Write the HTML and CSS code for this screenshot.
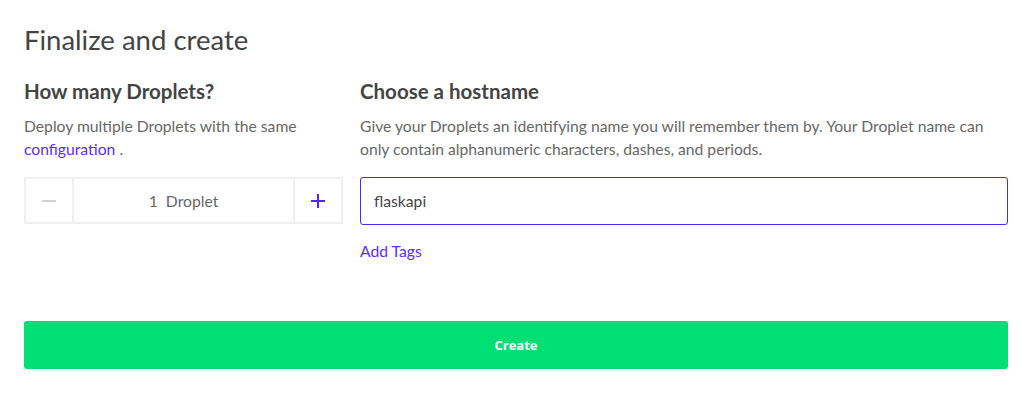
FILE: index.html
```html
<!DOCTYPE html>
<html>
<head>
<meta charset="utf-8">
<link rel="stylesheet" href="styles.css">
</head>
<body>
<div class="page">
  <h2 class="title">Finalize and create</h2>
  <div class="cols">
    <div class="col-left">
      <h3 class="sub">How many Droplets?</h3>
      <p class="desc">Deploy multiple Droplets with the same <a class="link">configuration</a> .</p>
      <div class="stepper">
        <div class="step-btn minus"><span class="minus-bar"></span></div>
        <div class="step-val">1&nbsp; Droplet</div>
        <div class="step-btn plus">
          <svg width="16" height="16" viewBox="0 0 16 16"><path d="M8 1v14M1 8h14" stroke="#4f26ff" stroke-width="2"/></svg>
        </div>
      </div>
    </div>
    <div class="col-right">
      <h3 class="sub">Choose a hostname</h3>
      <p class="desc">Give your Droplets an identifying name you will remember them by. Your Droplet name can only contain alphanumeric characters, dashes, and periods.</p>
      <div class="input">flaskapi</div>
      <a class="link tags">Add Tags</a>
    </div>
  </div>
  <div class="create">Create</div>
</div>
</body>
</html>
```
FILE: styles.css
```css
* { box-sizing: border-box; }
body { margin: 0; background: #fff; font-family: Lato, "Liberation Sans", sans-serif; color: #444; }
.page { padding: 24px 21px 0 24px; }
.title { margin: 0; font-size: 27.5px; font-weight: 400; line-height: 32px; color: #444; }
.cols { display: flex; gap: 17px; margin-top: 23px; }
.col-left { width: 319px; flex: none; }
.col-right { flex: 1; }
.sub { margin: 0; font-size: 20.5px; font-weight: 700; line-height: 24px; color: #444; }
.desc { margin: 12px 0 0; font-size: 15.7px; line-height: 23px; color: #676767; }
.link { color: #5b2cff; text-decoration: none; }
.stepper { display: flex; height: 47px; margin-top: 16px; border: 2px solid #efefef; }
.step-btn { width: 48px; flex: none; display: flex; align-items: center; justify-content: center; }
.minus { border-right: 2px solid #efefef; }
.plus { border-left: 2px solid #efefef; }
.minus-bar { width: 14px; height: 2px; background: #d0d0d0; }
.step-val { flex: 1; display: flex; align-items: center; justify-content: center; font-size: 15.7px; color: #666; }
.input { margin-top: 16px; height: 48px; border: 1px solid #4f26ff; border-radius: 3px; padding: 0 13px; display: flex; align-items: center; font-size: 15.7px; color: #444; }
.tags { display: block; margin-top: 16px; font-size: 15.7px; line-height: 20px; }
.create { margin-top: 60px; height: 48px; background: #00df74; border-radius: 3px; display: flex; align-items: center; justify-content: center; color: #fff; font-family: "Open Sans", sans-serif; font-weight: 700; font-size: 13px; }
```
